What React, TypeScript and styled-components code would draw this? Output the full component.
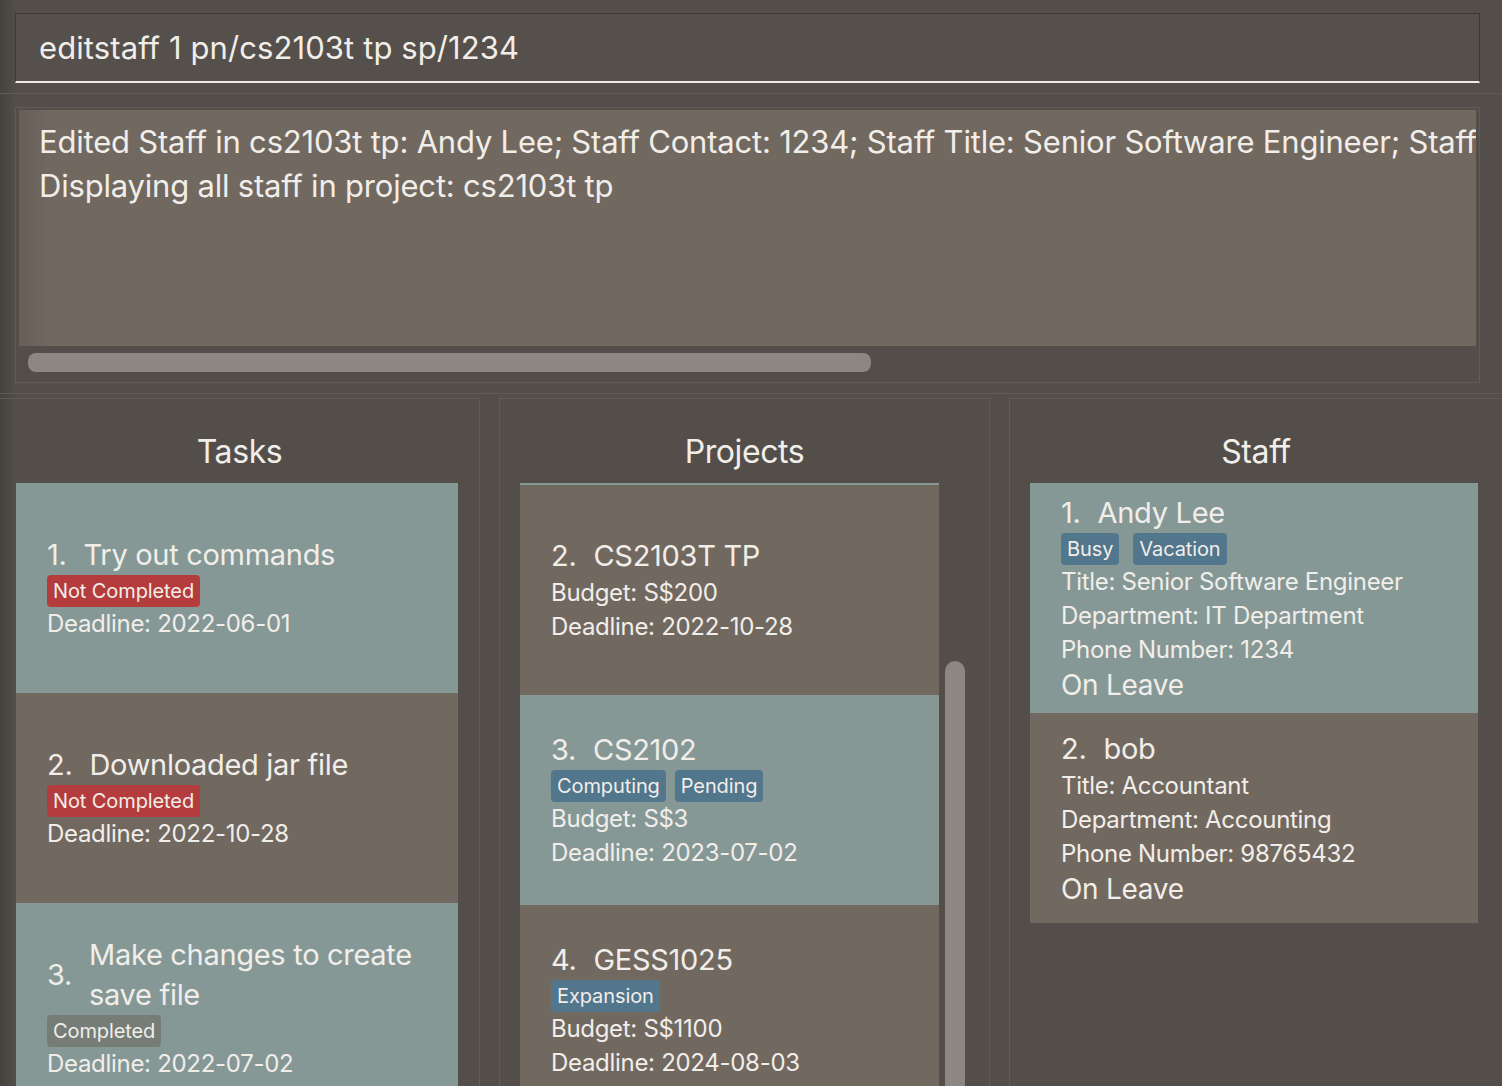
import React from "react";
import styled, { createGlobalStyle } from "styled-components";

const GlobalStyle = createGlobalStyle`
	html, body {
		margin: 0;
		padding: 0;
		background: #534e4a;
	}
	body {
		font-family: Inter, "Noto Sans", sans-serif;
		color: #f1eeea;
		-webkit-font-smoothing: antialiased;
	}
`;

const TEAL = "#869896";
const BROWN = "#716860";

const Window = styled.div`
	width: 1502px;
	height: 1086px;
	overflow: hidden;
	display: flex;
	flex-direction: column;
	background: linear-gradient(90deg, #45413d 0px, #534e4a 16px, #534e4a 100%);
`;

const CommandSection = styled.div`
	padding: 13px 22px 10px 15px;
	border-bottom: 1px solid #615b56;
`;

const CommandBox = styled.div`
	height: 67px;
	display: flex;
	align-items: center;
	padding-left: 23px;
	background: #55504b;
	border: 1px solid #3e3935;
	border-bottom: 2px solid #eeebe7;
	font-size: 31px;
	letter-spacing: 0.1px;
	white-space: pre;
`;

const ResultSection = styled.div`
	padding: 13px 22px 10px 15px;
	border-bottom: 1px solid #615b56;
`;

const ResultBox = styled.div`
	border: 1px solid #625c57;
	padding: 2px 3px 0 3px;
	height: 272px;
	display: flex;
	flex-direction: column;
`;

const ResultText = styled.div`
	height: 226px;
	padding: 10px 0 0 20px;
	background: linear-gradient(90deg, #665e57 0px, ${BROWN} 30px, ${BROWN} 100%);
	font-size: 31px;
	line-height: 44px;
	letter-spacing: -0.2px;
	white-space: pre;
	overflow: hidden;
`;

const HScrollTrack = styled.div`
	flex: 1;
	padding: 7px 0 0 9px;
`;

const HScrollThumb = styled.div`
	width: 843px;
	height: 19px;
	border-radius: 8px;
	background: #8c8782;
`;

const Columns = styled.div`
	flex: 1;
	display: flex;
	margin-top: 4px;
	min-height: 0;
`;

const Panel = styled.div<{ $width?: number; $left?: boolean; $right?: boolean }>`
	${p => (p.$width ? `width: ${p.$width}px;` : "flex: 1;")}
	flex-shrink: 0;
	box-sizing: border-box;
	border-top: 1px solid #615b56;
	border-left: ${p => (p.$left ? "1px solid #615b56" : "none")};
	border-right: ${p => (p.$right ? "1px solid #615b56" : "none")};
	display: flex;
	flex-direction: column;
	min-height: 0;
`;

const Gap = styled.div`
	width: 19px;
	flex-shrink: 0;
`;

const PanelTitle = styled.div`
	height: 84px;
	box-sizing: border-box;
	padding-top: 33px;
	text-align: center;
	font-size: 32px;
	line-height: 40px;
	letter-spacing: -0.4px;
`;

const ListArea = styled.div<{ $pl: number; $pr: number }>`
	flex: 1;
	display: flex;
	gap: 6px;
	padding: 0 ${p => p.$pr}px 0 ${p => p.$pl}px;
	min-height: 0;
	overflow: hidden;
`;

const List = styled.div<{ $topEdge?: boolean }>`
	flex: 1;
	display: flex;
	flex-direction: column;
	border-top: ${p => (p.$topEdge ? `2px solid ${TEAL}` : "none")};
`;

const VScroll = styled.div`
	width: 20px;
	flex-shrink: 0;
	padding-top: 178px;
	&::after {
		content: "";
		display: block;
		height: 500px;
		border-radius: 10px 10px 0 0;
		background: #8c8782;
	}
`;

const Card = styled.div<{ $teal: boolean }>`
	min-height: 210px;
	flex-shrink: 0;
	box-sizing: border-box;
	padding: 10px 20px 10px 31px;
	background: ${p => (p.$teal ? TEAL : BROWN)};
	display: flex;
	flex-direction: column;
	justify-content: center;
`;

const TitleRow = styled.div`
	display: flex;
	align-items: center;
	font-size: 29px;
	line-height: 40px;
	letter-spacing: -0.3px;
`;

const Index = styled.span`
	flex-shrink: 0;
	margin-right: 17px;
`;

const Name = styled.span`
	flex: 1;
`;

const TagRow = styled.div<{ $gap: number }>`
	display: flex;
	gap: ${p => p.$gap}px;
	height: 32px;
	align-items: center;
`;

const Tag = styled.span<{ $kind: "red" | "blue" | "grey" }>`
	display: inline-block;
	height: 32px;
	line-height: 32px;
	padding: 0 6px;
	border-radius: 4px;
	font-size: 20px;
	letter-spacing: -0.1px;
	background: ${p =>
		p.$kind === "red" ? "#b53c3c" : p.$kind === "blue" ? "#52768c" : "#767d77"};
`;

const Detail = styled.div<{ $big?: boolean }>`
	font-size: ${p => (p.$big ? 28 : 24)}px;
	line-height: ${p => (p.$big ? 36 : 34)}px;
	letter-spacing: -0.3px;
	white-space: nowrap;
`;

const tasks = [
	{ id: 1, name: "Try out commands", done: false, deadline: "2022-06-01" },
	{ id: 2, name: "Downloaded jar file", done: false, deadline: "2022-10-28" },
	{ id: 3, name: "Make changes to create save file", done: true, deadline: "2022-07-02" }
];

const projects = [
	{ id: 2, name: "CS2103T TP", tags: [] as string[], budget: "S$200", deadline: "2022-10-28" },
	{ id: 3, name: "CS2102", tags: ["Computing", "Pending"], budget: "S$3", deadline: "2023-07-02" },
	{ id: 4, name: "GESS1025", tags: ["Expansion"], budget: "S$1100", deadline: "2024-08-03" }
];

const staff = [
	{
		id: 1,
		name: "Andy Lee",
		tags: ["Busy", "Vacation"],
		title: "Senior Software Engineer",
		dept: "IT Department",
		phone: "1234"
	},
	{ id: 2, name: "bob", tags: [] as string[], title: "Accountant", dept: "Accounting", phone: "98765432" }
];

export default function App() {
	return (
		<>
			<GlobalStyle />
			<Window>
				<CommandSection>
					<CommandBox>editstaff 1 pn/cs2103t tp sp/1234</CommandBox>
				</CommandSection>
				<ResultSection>
					<ResultBox>
						<ResultText>
							{"Edited Staff in cs2103t tp: Andy Lee; Staff Contact: 1234; Staff Title: Senior Software Engineer; Staff\nDisplaying all staff in project: cs2103t tp"}
						</ResultText>
						<HScrollTrack>
							<HScrollThumb />
						</HScrollTrack>
					</ResultBox>
				</ResultSection>
				<Columns>
					<Panel $width={480} $right>
						<PanelTitle>Tasks</PanelTitle>
						<ListArea $pl={16} $pr={21}>
							<List>
								{tasks.map(t => (
									<Card key={t.id} $teal={t.id % 2 === 1}>
										<TitleRow>
											<Index>{t.id}.</Index>
											<Name>{t.name}</Name>
										</TitleRow>
										<TagRow $gap={9}>
											<Tag $kind={t.done ? "grey" : "red"}>
												{t.done ? "Completed" : "Not Completed"}
											</Tag>
										</TagRow>
										<Detail>Deadline: {t.deadline}</Detail>
									</Card>
								))}
							</List>
						</ListArea>
					</Panel>
					<Gap />
					<Panel $width={491} $left $right>
						<PanelTitle>Projects</PanelTitle>
						<ListArea $pl={20} $pr={24}>
							<List $topEdge>
								{projects.map(p => (
									<Card key={p.id} $teal={p.id % 2 === 1}>
										<TitleRow>
											<Index>{p.id}.</Index>
											<Name>{p.name}</Name>
										</TitleRow>
										{p.tags.length > 0 && (
											<TagRow $gap={9}>
												{p.tags.map(tag => (
													<Tag key={tag} $kind="blue">
														{tag}
													</Tag>
												))}
											</TagRow>
										)}
										<Detail>Budget: {p.budget}</Detail>
										<Detail>Deadline: {p.deadline}</Detail>
									</Card>
								))}
							</List>
							<VScroll />
						</ListArea>
					</Panel>
					<Gap />
					<Panel $left>
						<PanelTitle>Staff</PanelTitle>
						<ListArea $pl={20} $pr={24}>
							<List>
								{staff.map(s => (
									<Card key={s.id} $teal={s.id % 2 === 1}>
										<TitleRow>
											<Index>{s.id}.</Index>
											<Name>{s.name}</Name>
										</TitleRow>
										{s.tags.length > 0 && (
											<TagRow $gap={14}>
												{s.tags.map(tag => (
													<Tag key={tag} $kind="blue">
														{tag}
													</Tag>
												))}
											</TagRow>
										)}
										<Detail>Title: {s.title}</Detail>
										<Detail>Department: {s.dept}</Detail>
										<Detail>Phone Number: {s.phone}</Detail>
										<Detail $big>On Leave</Detail>
									</Card>
								))}
							</List>
						</ListArea>
					</Panel>
				</Columns>
			</Window>
		</>
	);
}
